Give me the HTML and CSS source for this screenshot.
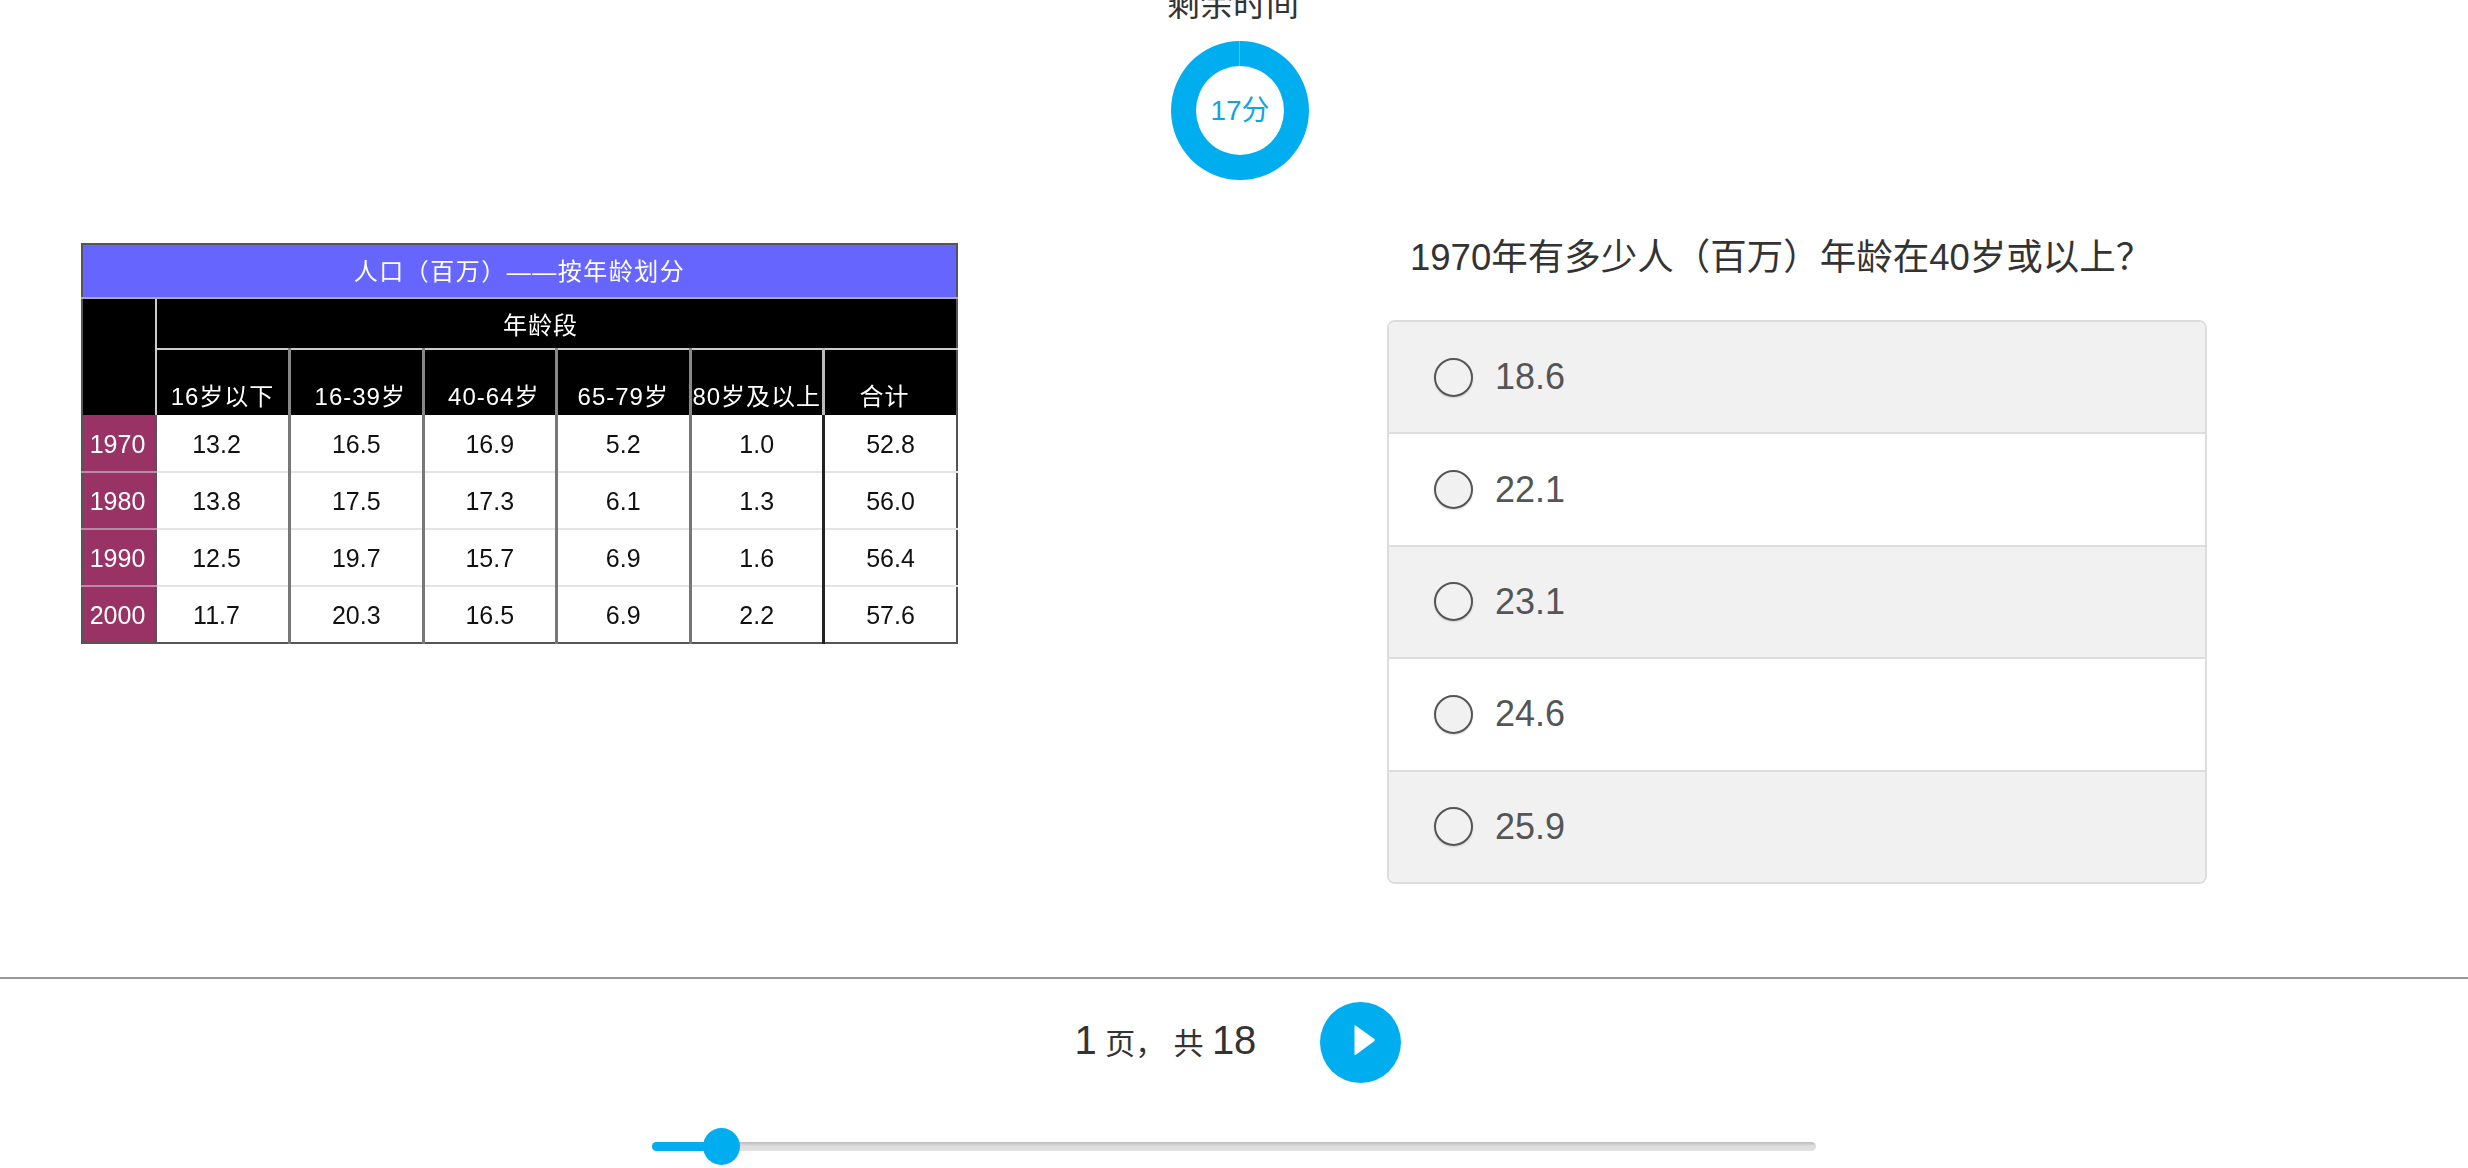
FILE: index.html
```html
<!DOCTYPE html>
<html lang="zh-CN">
<head>
<meta charset="utf-8">
<title>测试</title>
<link rel="stylesheet" href="styles.css">
</head>
<body>
<div class="page">
  <header class="timer">
    <div class="timer-title">剩余时间</div>
    <div class="ring"><span class="ring-label">17分</span></div>
  </header>
  <main class="main">
    <table class="data">
      <colgroup>
        <col class="c-year"><col class="c-val"><col class="c-val"><col class="c-val"><col class="c-val"><col class="c-val"><col class="c-val">
      </colgroup>
      <thead>
        <tr class="r-title"><th colspan="7">人口（百万）——按年龄划分</th></tr>
        <tr class="r-group"><th class="corner" rowspan="2"></th><th colspan="6">年龄段</th></tr>
        <tr class="r-head">
          <th class="h1">16岁以下</th><th class="h2">16-39岁</th><th class="h2">40-64岁</th><th>65-79岁</th><th>80岁及以上</th><th class="strong">合计</th>
        </tr>
      </thead>
      <tbody>
        <tr><th>1970</th><td class="first">13.2</td><td>16.5</td><td>16.9</td><td>5.2</td><td>1.0</td><td class="strong">52.8</td></tr>
        <tr><th>1980</th><td class="first">13.8</td><td>17.5</td><td>17.3</td><td>6.1</td><td>1.3</td><td class="strong">56.0</td></tr>
        <tr><th>1990</th><td class="first">12.5</td><td>19.7</td><td>15.7</td><td>6.9</td><td>1.6</td><td class="strong">56.4</td></tr>
        <tr class="r-last"><th>2000</th><td class="first">11.7</td><td>20.3</td><td>16.5</td><td>6.9</td><td>2.2</td><td class="strong">57.6</td></tr>
      </tbody>
    </table>
    <section class="quiz">
      <h1 class="question">1970年有多少人（百万）年龄在40岁或以上？</h1>
      <ul class="options">
        <li class="option"><span class="radio"></span><span>18.6</span></li>
        <li class="option"><span class="radio"></span><span>22.1</span></li>
        <li class="option"><span class="radio"></span><span>23.1</span></li>
        <li class="option"><span class="radio"></span><span>24.6</span></li>
        <li class="option"><span class="radio"></span><span>25.9</span></li>
      </ul>
    </section>
  </main>
  <footer class="footer">
    <div class="pager">
      <div class="count"><span class="num">1</span> 页， 共 <span class="num">18</span></div>
      <button class="next" type="button" aria-label="下一页">
        <svg width="22" height="32" viewBox="0 0 22 32"><path d="M1.5 1.5 L20.5 15 Q21 16 20.5 17 L1.5 31 Q0.5 31.5 0.5 30 V2 Q0.5 0.8 1.5 1.5 Z" fill="#fff"/></svg>
      </button>
    </div>
    <div class="slider"><div class="slider-fill"></div><div class="slider-thumb"></div></div>
  </footer>
</div>
</body>
</html>
```
FILE: styles.css
```css
* { box-sizing: border-box; }
html, body { margin: 0; padding: 0; background: #fff; }
body {
  font-family: "Liberation Sans", "Noto Sans CJK SC", sans-serif;
  color: #333;
  overflow: hidden;
}
.page { width: 2468px; height: 1168px; overflow: hidden; }

/* timer */
.timer { display: flex; flex-direction: column; align-items: center; margin-top: -17px; }
.timer-title { font-size: 33px; line-height: 44px; height: 44px; padding-right: 2px; }
.ring {
  position: relative;
  width: 138px;
  height: 139px;
  margin-top: 14px;
  margin-left: 12px;
  border: 25px solid #00aeef;
  border-radius: 50%;
  display: flex;
  align-items: center;
  justify-content: center;
}
.ring::before {
  content: "";
  position: absolute;
  top: -25px;
  left: 43px;
  width: 1px;
  height: 25px;
  background: rgba(255, 255, 255, 0.3);
}
.ring-label { font-size: 28px; color: #0fa6de; white-space: nowrap; padding-bottom: 6px; }

/* main */
.main { display: flex; align-items: flex-start; margin-top: 63px; padding-left: 81px; }

.data {
  width: 877px;
  table-layout: fixed;
  border-collapse: collapse;
  border: 2px solid #555;
  font-size: 25px;
  filter: blur(0.4px);
  flex: none;
}
.c-year { width: 74px; }
.data th, .data td { padding: 0; text-align: center; font-weight: normal; }
.r-title th {
  height: 54px;
  padding-bottom: 3px;
  background: #6666ff;
  color: #fff;
  font-size: 24px;
  letter-spacing: 1.5px;
  border-bottom: 2px solid #aab;
}
.r-group th {
  height: 51px;
  padding-right: 32px;
  background: #000;
  color: #fff;
  font-size: 24px;
  letter-spacing: 1px;
  border-bottom: 2px solid #ccc;
}
.r-group th:last-child { border-left: 2px solid #ccc; }
.r-group .corner { border-bottom: 0; padding: 0; }
.r-head th {
  height: 66px;
  background: #000;
  color: #fff;
  font-size: 24px;
  vertical-align: bottom;
  padding-bottom: 3px;
  letter-spacing: 1px;
  border-left: 3px solid #888;
  white-space: nowrap;
}
.r-head th.h1 { border-left: 2px solid #ccc; }
.r-head th.h2 { padding-left: 8px; }
.r-head th.strong { border-left-color: #bbb; padding-right: 12px; }
.data tbody tr { height: 57px; }
.data tbody th {
  padding: 2px 3px 0 0;
  background: #993366;
  color: #fff;
  border-right: 2px solid #555;
  border-bottom: 2px solid #b98aa4;
}
.data tbody td {
  padding-top: 2px;
  background: #fff;
  color: #111;
  border-left: 3px solid #777;
  border-bottom: 2px solid #e4e4e4;
}
.data tbody td.first { border-left: 0; padding-right: 12px; }
.data tbody td.strong { border-left: 3px solid #222; }
.data tbody .r-last th, .data tbody .r-last td { border-bottom: 0; }

/* quiz */
.quiz { width: 820px; margin-left: 429px; flex: none; }
.question {
  margin: 0 0 47px;
  padding-left: 23px;
  font-size: 36.5px;
  font-weight: normal;
  line-height: 30px;
  white-space: nowrap;
}
.options {
  list-style: none;
  margin: 0;
  padding: 0;
  border: 2px solid #ddd;
  border-radius: 8px;
  overflow: hidden;
}
.option {
  display: flex;
  align-items: center;
  gap: 22px;
  height: 112.4px;
  padding-left: 45px;
  font-size: 36px;
  color: #555;
  border-bottom: 2px solid #ddd;
  background: #fff;
}
.option:nth-child(odd) { background: #f1f1f1; }
.option:last-child { border-bottom: 0; height: 110.4px; }
.radio {
  width: 39px;
  height: 39px;
  border: 2px solid #555;
  border-radius: 50%;
  background: #f1f1f1;
  box-shadow: 0 1px 2px rgba(0, 0, 0, 0.15);
  flex: none;
}

/* footer */
.footer { margin-top: 93px; border-top: 2px solid #999; }
.pager { display: flex; justify-content: center; align-items: center; gap: 64px; padding: 23px 0 0 8px; }
.count { font-size: 30px; line-height: 50px; white-space: nowrap; }
.num { font-size: 40px; }
.next {
  width: 81px;
  height: 81px;
  padding: 0 0 4px 9px;
  border: 0;
  border-radius: 50%;
  background: #00aeef;
  display: flex;
  align-items: center;
  justify-content: center;
}
.slider {
  position: relative;
  width: 1164px;
  height: 9px;
  margin: 59px 0 0 652px;
  border-radius: 5px;
  background: linear-gradient(#bbb, #ddd 45%, #e2e2e2);
}
.slider-fill { width: 70px; height: 9px; border-radius: 5px; background: #00aeef; }
.slider-thumb {
  position: absolute;
  left: 51px;
  top: -14px;
  width: 37px;
  height: 37px;
  border-radius: 50%;
  background: #00aeef;
}
```
